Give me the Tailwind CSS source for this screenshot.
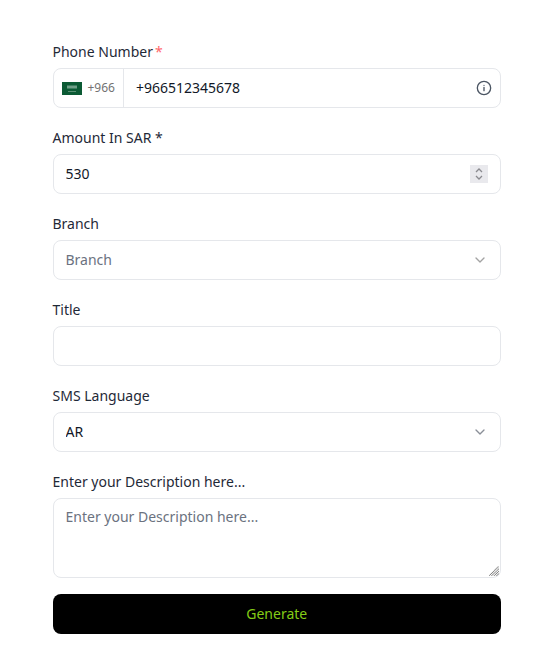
<!DOCTYPE html>
<html lang="en">
<head>
  <meta charset="UTF-8">
  <title>Payment Link</title>
  <meta name="viewport" content="width=device-width, initial-scale=1.0">
  <script src="https://cdn.jsdelivr.net/npm/@tailwindcss/browser@4"></script>
</head>
<body class="bg-white min-h-screen font-['Noto_Sans',sans-serif] text-sm text-[#111827]">
  <form class="w-[448.5px] ml-[52.5px] pt-[42px] flex flex-col">

    <div class="h-[66px] flex flex-col justify-between mb-[20px]">
      <label class="h-5 leading-5 text-[#1f2937]">Phone Number<span class="text-red-400 leading-5 ml-0.5">*</span></label>
      <div class="h-10 flex items-center border border-[#e5e7eb] rounded-lg">
        <div class="h-full w-[70.5px] shrink-0 flex items-center gap-1.5 pl-2 border-r border-[#e5e7eb]">
          <svg width="20" height="13" viewBox="0 0 20 13" class="shrink-0">
            <rect width="20" height="13" fill="#0b5a34"/>
            <rect x="5" y="3.5" width="10" height="3" fill="#6f9f87"/>
            <rect x="6" y="9" width="8" height="0.7" fill="#7ea893"/>
          </svg>
          <span class="text-xs text-[#737373]">+966</span>
        </div>
        <input value="+966512345678" class="flex-1 min-w-0 px-3 outline-none bg-transparent" />
        <svg width="16" height="16" viewBox="0 0 24 24" fill="none" stroke="#4b5563" stroke-width="2" stroke-linecap="round" class="mr-2 shrink-0">
          <circle cx="12" cy="12" r="10"/>
          <path d="M12 16v-5M12 8h.01"/>
        </svg>
      </div>
    </div>

    <div class="h-[66px] flex flex-col justify-between mb-[20px]">
      <label class="h-5 leading-5 text-[#1f2937]">Amount In SAR *</label>
      <div class="h-10 flex items-center border border-[#e5e7eb] rounded-lg">
        <input value="530" class="flex-1 min-w-0 px-3 outline-none bg-transparent" />
        <span class="w-[18px] h-[18px] mr-3 shrink-0 bg-[#e9e9ed] flex items-center justify-center">
          <svg width="10" height="14" viewBox="0 0 10 14" fill="none" stroke="#8a8a8f" stroke-width="1.3">
            <path d="M2 5l3-3 3 3M2 9l3 3 3-3"/>
          </svg>
        </span>
      </div>
    </div>

    <div class="h-[66px] flex flex-col justify-between mb-[20px]">
      <label class="h-5 leading-5 text-[#1f2937]">Branch</label>
      <div class="relative h-10">
        <select class="w-full h-full appearance-none px-3 border border-[#e5e7eb] rounded-lg outline-none bg-white text-[#6b7280]">
          <option>Branch</option>
        </select>
        <svg width="16" height="16" viewBox="0 0 24 24" fill="none" stroke="#a3a3a3" stroke-width="2" stroke-linecap="round" stroke-linejoin="round" class="absolute right-[13px] top-3 pointer-events-none">
          <path d="M6 9l6 6 6-6"/>
        </svg>
      </div>
    </div>

    <div class="h-[66px] flex flex-col justify-between mb-[20px]">
      <label class="h-5 leading-5 text-[#1f2937]">Title</label>
      <input class="h-10 px-3 border border-[#e5e7eb] rounded-lg outline-none" />
    </div>

    <div class="h-[66px] flex flex-col justify-between mb-[20px]">
      <label class="h-5 leading-5 text-[#1f2937]">SMS Language</label>
      <div class="relative h-10">
        <select class="w-full h-full appearance-none px-3 border border-[#e5e7eb] rounded-lg outline-none bg-white">
          <option>AR</option>
        </select>
        <svg width="16" height="16" viewBox="0 0 24 24" fill="none" stroke="#8a8f98" stroke-width="2" stroke-linecap="round" stroke-linejoin="round" class="absolute right-[13px] top-3 pointer-events-none">
          <path d="M6 9l6 6 6-6"/>
        </svg>
      </div>
    </div>

    <div class="h-[106px] flex flex-col justify-between mb-4">
      <label class="h-5 leading-5 text-[#1f2937]">Enter your Description here...</label>
      <div class="relative h-20">
        <textarea placeholder="Enter your Description here..." class="block w-full h-full resize-none px-3 py-2 border border-[#e5e7eb] rounded-lg outline-none placeholder:text-[#6b7280]"></textarea>
        <svg width="10" height="10" viewBox="0 0 10 10" fill="none" stroke="#777" stroke-width="1.1" stroke-dasharray="1 0.5" class="absolute right-[2px] bottom-[2px] pointer-events-none">
          <path d="M0 10L10 0M2.5 10L10 2.5M5 10L10 5M7.5 10L10 7.5"/>
        </svg>
      </div>
    </div>

    <button type="button" class="h-10 bg-black rounded-lg text-[#84cc16]">Generate</button>
  </form>
</body>
</html>
